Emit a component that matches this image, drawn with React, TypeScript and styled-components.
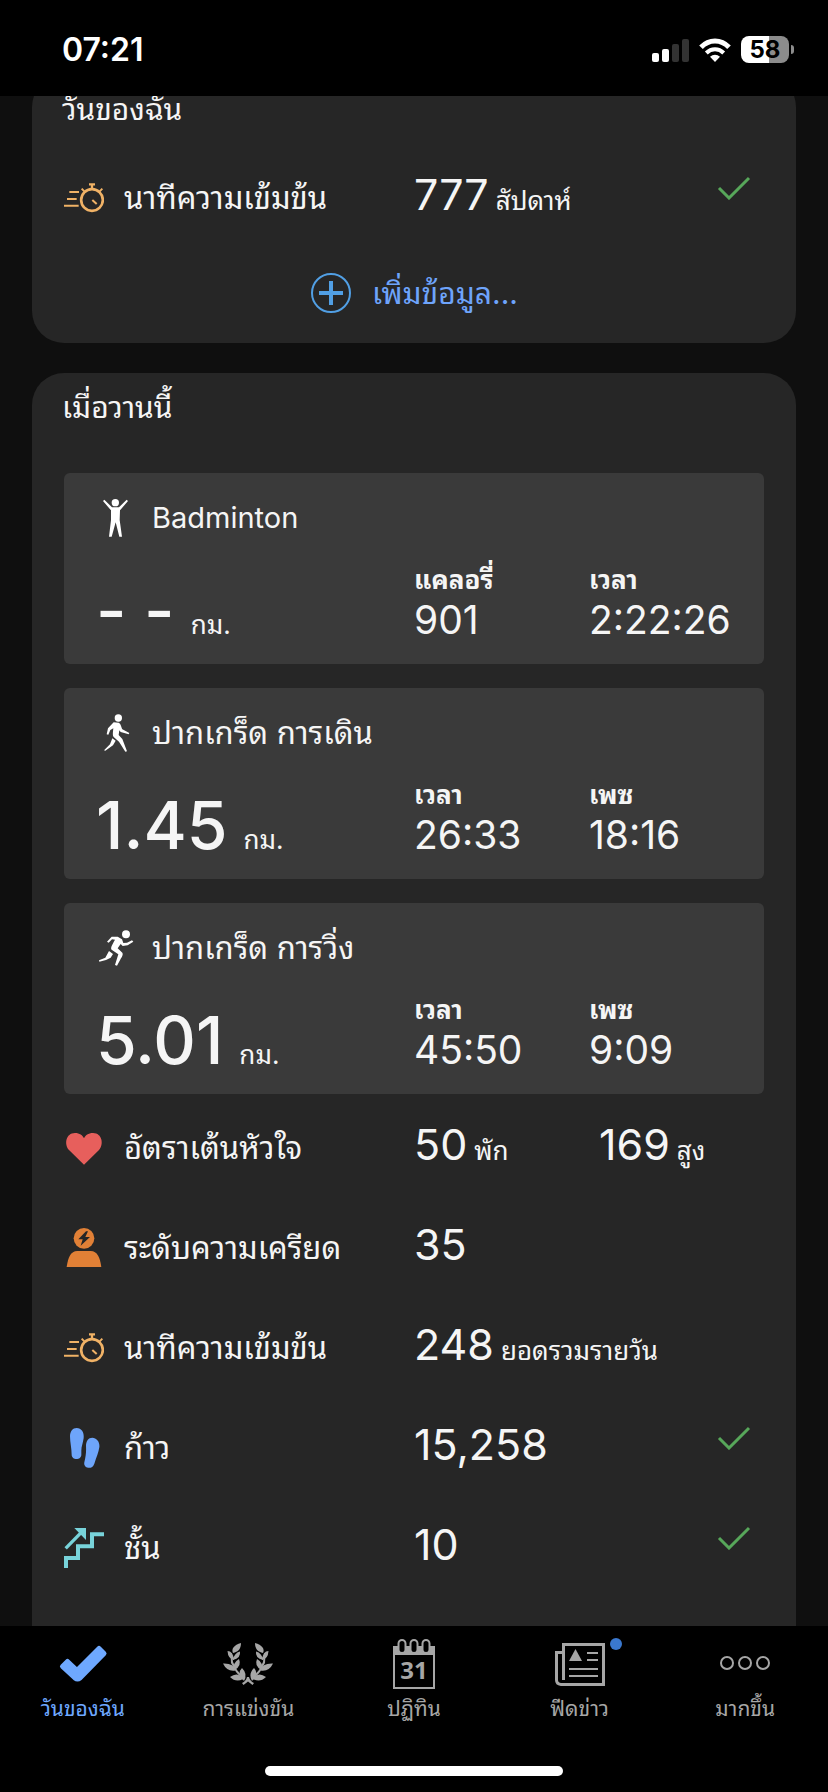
import React from "react";
import styled, { createGlobalStyle } from "styled-components";

const GlobalStyle = createGlobalStyle`
  * { box-sizing: border-box; }
  body {
    margin: 0;
    background: #0f0f0f;
    color: #f5f5f5;
    font-family: Inter, "Noto Sans Thai Looped", "Noto Looped Thai", Loma, Waree, Garuda, Umpush, "Noto Serif Thai", "Noto Sans Thai", sans-serif;
  }
  button { font: inherit; color: inherit; background: none; border: 0; padding: 0; cursor: pointer; }
  h2, h3, p, dl, dd, dt, ul { margin: 0; padding: 0; font-weight: 400; }
  svg { display: block; flex: none; }
`;

const Screen = styled.div`
  display: flex;
  flex-direction: column;
  height: 100vh;
  overflow: hidden;
`;

const StatusBar = styled.header`
  display: flex;
  align-items: center;
  justify-content: space-between;
  flex: none;
  height: 96px;
  padding: 3px 34px 0 62px;
  background: #000;
`;

const Clock = styled.time`
  font-size: 32px;
  line-height: 40px;
  font-weight: 600;
  color: #fff;
`;

const StatusIcons = styled.div`
  display: flex;
  align-items: center;
  gap: 10px;
`;

const Battery = styled.div`
  display: flex;
  align-items: center;
  gap: 2px;
`;

const BatteryBody = styled.div`
  width: 48px;
  border-radius: 8px;
  background: linear-gradient(to right, #fff 58%, #8c8c8c 58%);
  color: #000;
  font-size: 24px;
  line-height: 27px;
  font-weight: 700;
  text-align: center;
`;

const BatteryTip = styled.div`
  width: 3px;
  height: 9px;
  border-radius: 0 3px 3px 0;
  background: #8c8c8c;
`;

const Feed = styled.main`
  flex: 1;
  min-height: 0;
  overflow: hidden;
  padding: 0 32px;
`;

const Card = styled.section<{ $scrolled?: boolean }>`
  margin-top: ${(p) => (p.$scrolled ? "-21px" : "30px")};
  padding: 0 32px;
  border-radius: 32px;
  background: #262626;
`;

const CardTitle = styled.h2<{ $tall?: boolean }>`
  height: ${(p) => (p.$tall ? "100px" : "73px")};
  padding-top: 14px;
  margin-left: -2px;
  font-size: 30px;
  line-height: 40px;
`;

const AddButton = styled.button`
  display: flex;
  align-items: center;
  justify-content: center;
  gap: 20px;
  width: 100%;
  height: 95px;
  padding-bottom: 5px;
  color: #6ea4fb;
  font-size: 30px;
  line-height: 40px;
`;

const Activities = styled.div`
  display: grid;
  gap: 24px;
  margin-bottom: 4px;
`;

const Activity = styled.article`
  height: 191px;
  padding-top: 24px;
  border-radius: 6px;
  background: #3a3a3a;
`;

const ActivityHead = styled.header`
  display: flex;
  align-items: center;
  gap: 16px;
  padding-left: 32px;
  height: 42px;
`;

const ActivityName = styled.h3`
  font-size: 31px;
  line-height: 40px;

  &:lang(en) { font-size: 29px; }
`;

const ActivityStats = styled.div`
  display: grid;
  grid-template-columns: minmax(0, 2fr) minmax(0, 1fr) minmax(0, 1fr);
  align-items: last baseline;
  height: 111px;
`;

const Distance = styled.p`
  display: flex;
  align-items: baseline;
  gap: 16px;
  padding-left: 32px;
  font-size: 66px;
  line-height: 80px;
  font-weight: 500;
`;

const Unit = styled.span`
  font-size: 26px;
  line-height: 32px;
  font-weight: 400;
`;

const Stat = styled.dl`
  white-space: nowrap;
  dt { font-size: 26px; line-height: 32px; font-weight: 700; }
  dd { font-size: 39px; line-height: 48px; }
`;

const Metric = styled.div`
  display: grid;
  grid-template-columns: minmax(0, 2fr) minmax(0, 1fr) minmax(0, 1fr);
  align-items: center;
  height: 100px;
  padding-bottom: 1px;
`;

const MetricName = styled.div`
  display: flex;
  align-items: center;
  gap: 20px;
  font-size: 31px;
  line-height: 40px;
  white-space: nowrap;
`;

const MetricValue = styled.div<{ $second?: boolean }>`
  display: flex;
  align-items: baseline;
  gap: 7px;
  padding-left: ${(p) => (p.$second ? "10px" : "0")};
  padding-bottom: 8px;
  font-size: 43px;
  line-height: 52px;
  white-space: nowrap;
`;

const Goal = styled.div`
  display: flex;
  justify-content: flex-end;
  grid-column: 3;
  padding: 0 13px 20px 0;
`;

const TabBar = styled.nav`
  display: flex;
  flex: none;
  background: #000;
`;

const Tab = styled.button<{ $active?: boolean }>`
  display: flex;
  flex: 1;
  flex-direction: column;
  align-items: center;
  gap: 3px;
  padding-top: 10px;
  color: ${(p) => (p.$active ? "#6ea8ff" : "#a6a6a6")};
  font-size: 21px;
  line-height: 32px;
`;

const TabIcon = styled.span`
  position: relative;
`;

const Dot = styled.i`
  position: absolute;
  top: 2px;
  right: -16px;
  width: 12px;
  height: 12px;
  border-radius: 50%;
  background: #3a78cf;
`;

const HomeArea = styled.footer`
  display: flex;
  justify-content: center;
  flex: none;
  padding: 41px 0 16px;
  background: #000;
`;

const HomeIndicator = styled.div`
  width: 36%;
  height: 10px;
  border-radius: 5px;
  background: #fff;
`;

const Signal = () => (
  <svg width="37" height="24" viewBox="0 0 37 24" aria-hidden="true">
    <rect x="0" y="15" width="7" height="9" rx="2" fill="#fff" />
    <rect x="10" y="11" width="7" height="13" rx="2" fill="#fff" />
    <rect x="20" y="6" width="7" height="18" rx="2" fill="#333" />
    <rect x="30" y="1" width="7" height="23" rx="2" fill="#333" />
  </svg>
);

const Wifi = () => (
  <svg width="32" height="24" viewBox="0 0 32 24" fill="none" stroke="#fff" strokeWidth="5" aria-hidden="true">
    <path d="M2 9.200C10 .8 22 .8 30 9.200" />
    <path d="M7.300 15C12.300 10 19.700 10 24.700 15" strokeWidth="4" />
    <path d="M11 18.800C14 16 18 16 21 18.800L16 24Z" fill="#fff" stroke="none" />
  </svg>
);

const Stopwatch = () => (
  <svg width="40" height="40" viewBox="72 684 120 120" fill="none" stroke="#f0b266" aria-hidden="true">
    <circle cx="156" cy="750" r="32.500" strokeWidth="8" />
    <path d="M157 750l13 12" strokeWidth="6" />
    <path d="M147 703h18M156 703v15" strokeWidth="7" />
    <path d="M125 716l8 8M187 716l-8 8" strokeWidth="6" />
    <path d="M88 726h29M81 747h29M72 767h44" strokeWidth="6" />
  </svg>
);

const Heart = () => (
  <svg width="40" height="40" viewBox="72 84 120 120" fill="#e75f5c" aria-hidden="true">
    <path d="M132 194L87 150C72 134 77 99 105 99C119 99 128 106 132 115C136 106 145 99 159 99C187 99 192 134 177 150Z" />
  </svg>
);

const Stress = () => (
  <svg width="40" height="40" viewBox="72 384 120 120" fill="#e18036" aria-hidden="true">
    <circle cx="132" cy="415" r="31" />
    <path d="M80 501C84 473 92 453 112 453H152C172 453 180 473 184 501Z" />
    <path d="M138 394L115 418H128L122 437L150 411H136L144 394Z" fill="#262626" />
  </svg>
);

const Steps = () => (
  <svg width="40" height="40" viewBox="72 171 120 120" fill="#6ea5fa" aria-hidden="true">
    <path d="M110 171C124 171 133 184 131 201C129 217 124 226 124 239V251C124 268 95 268 95 251C95 232 90 214 90 196C90 181 98 171 110 171Z" />
    <path d="M157 200C170 200 180 213 178 229C176 245 169 258 163 278C158 297 129 293 133 274C137 257 139 246 138 225C138 210 145 200 157 200Z" />
  </svg>
);

const Floors = () => (
  <svg width="40" height="40" viewBox="72 471 120 120" fill="none" stroke="#78d3da" aria-hidden="true">
    <path d="M78 591V561H114V526H156V490H192" strokeWidth="12" />
    <path d="M77 532L124 484" strokeWidth="10" />
    <path d="M103 471H138V507Z" fill="#78d3da" stroke="none" />
  </svg>
);

const Calories = () => (
  <svg width="40" height="40" viewBox="0 0 40 40" fill="#6ea5fa" aria-hidden="true">
    <path d="M20 4C24 12 32 16 32 25A12 12 0 0 1 8 25C8 19 12 16 13 11C16 13 19 10 20 4Z" />
  </svg>
);

const ArmsUp = () => (
  <svg width="40" height="40" viewBox="198 114 120 120" fill="#fff" aria-hidden="true">
    <circle cx="256" cy="128" r="11" />
    <path d="M219 123L223 119L246 142H267L290 119L294 123L270 151L269 180L276 230H268L257 187L245 230H237L243 180V151Z" />
  </svg>
);

const Walker = () => (
  <svg width="40" height="40" viewBox="198 70 120 120" fill="#fff" aria-hidden="true">
    <circle cx="265" cy="85" r="11" />
    <path d="M251 98L266 99C272 101 274 112 277 119L298 130L296 134L272 127L268 122L266 136L277 148L291 185L286 186L267 156L251 142C247 138 249 126 250 116L241 121L235 135L230 134L234 116Z" />
    <path d="M247 146L257 153L249 167L226 183L222 182L240 164Z" />
  </svg>
);

const Runner = () => (
  <svg width="40" height="40" viewBox="198 712 120 120" fill="#fff" aria-hidden="true">
    <circle cx="288" cy="731" r="12" />
    <path d="M245 738H263L276 746L280 757L291 756L306 749L310 753L293 764L278 766L272 760L263 773L277 786C280 790 277 797 273 803L261 825L255 823L265 791L246 778C240 773 245 765 255 747L246 746L236 756L231 753Z" />
    <path d="M237 781L249 790L242 801L228 808L208 813L207 809L226 801Z" />
  </svg>
);

const Plus = () => (
  <svg width="42" height="42" viewBox="0 0 42 42" fill="none" stroke="#519fe4" aria-hidden="true">
    <circle cx="21" cy="21" r="19" strokeWidth="2" />
    <path d="M21 9V33M9 21H33" strokeWidth="4" />
  </svg>
);

const Check = () => (
  <svg width="34" height="24" viewBox="0 0 34 24" fill="none" stroke="#57a75a" strokeWidth="3" aria-hidden="true">
    <path d="M2 12L12 22L32 2" />
  </svg>
);

const DayIcon = () => (
  <svg width="52" height="54" viewBox="0 0 52 54" aria-hidden="true">
    <path
      d="M5.500 30.500L10.500 25.500L20 34.500L42 12.500L47 17.500L23 42Q20.500 44 18 42Z"
      fill="currentColor"
      stroke="currentColor"
      strokeWidth="5"
      strokeLinejoin="round"
    />
  </svg>
);

const Branch = () => (
  <g>
    <path d="M18 7C11 9 8 13 10 17C15 16 18 13 18 7Z" />
    <path d="M4.500 15Q10 15 11 24Q5 23 4.500 15ZM10 24Q11 17 17 15.500Q18 22 10 24Z" />
    <path d="M0 27.500Q11 27 12.500 34.500Q4 36 0 27.500ZM11.500 34Q9 27 16 23Q19 30 11.500 34Z" />
    <path d="M7 41Q15 35 20 43Q13 47 7 41ZM19.500 43Q14 37 19 32Q25 38 21 45Z" />
    <path d="M9 17L7.500 17.500L8 27L13 36L20 44L21 42L14 34L10 26Z" />
    <path d="M19 47Q23 45 24 41H25V45.500L20.500 49Z" />
  </g>
);

const WreathIcon = () => (
  <svg width="52" height="54" viewBox="-1 0 52 54" fill="currentColor" aria-hidden="true">
    <Branch />
    <g transform="matrix(-1 0 0 1 50 0)">
      <Branch />
    </g>
  </svg>
);

const CalendarIcon = () => (
  <svg width="52" height="54" viewBox="0 0 52 54" aria-hidden="true">
    <rect x="6" y="14" width="40" height="38" fill="none" stroke="currentColor" strokeWidth="2" />
    <rect x="5" y="10" width="42" height="9" fill="currentColor" />
    <g fill="#000" stroke="currentColor" strokeWidth="2">
      <rect x="10.500" y="4" width="7" height="13" rx="3.500" />
      <rect x="22.500" y="4" width="7" height="13" rx="3.500" />
      <rect x="34.500" y="4" width="7" height="13" rx="3.500" />
    </g>
    <text x="26" y="43" textAnchor="middle" fontFamily="Open Sans" fontSize="24" fontWeight="700" fill="currentColor">31</text>
  </svg>
);

const NewsIcon = () => (
  <svg width="52" height="54" viewBox="0 0 52 54" fill="none" stroke="currentColor" strokeWidth="3" aria-hidden="true">
    <path d="M9.500 44V8.500H49.500V48.500H7Q2.500 48 2.500 44V16.500H9" />
    <path d="M33 17H44M33 24H44M15 33H44M15 40H44" strokeWidth="2" />
    <path d="M15 25L21.500 13L28 25Z" fill="currentColor" stroke="none" />
  </svg>
);

const MoreIcon = () => (
  <svg width="52" height="54" viewBox="0 0 52 54" fill="none" stroke="currentColor" strokeWidth="2" aria-hidden="true">
    <circle cx="8" cy="27" r="6" />
    <circle cx="26" cy="27" r="6" />
    <circle cx="44" cy="27" r="6" />
  </svg>
);

type Reading = { value: string; unit?: string };

const activities = [
  { icon: <ArmsUp />, name: "Badminton", lang: "en", distance: "- -", stats: [["แคลอรี่", "901"], ["เวลา", "2:22:26"]] },
  { icon: <Walker />, name: "ปากเกร็ด การเดิน", lang: "th", distance: "1.45", stats: [["เวลา", "26:33"], ["เพซ", "18:16"]] },
  { icon: <Runner />, name: "ปากเกร็ด การวิ่ง", lang: "th", distance: "5.01", stats: [["เวลา", "45:50"], ["เพซ", "9:09"]] },
];

const metrics: { icon: React.ReactNode; name: string; readings: Reading[]; met?: boolean }[] = [
  { icon: <Heart />, name: "อัตราเต้นหัวใจ", readings: [{ value: "50", unit: "พัก" }, { value: "169", unit: "สูง" }] },
  { icon: <Stress />, name: "ระดับความเครียด", readings: [{ value: "35" }] },
  { icon: <Stopwatch />, name: "นาทีความเข้มข้น", readings: [{ value: "248", unit: "ยอดรวมรายวัน" }] },
  { icon: <Steps />, name: "ก้าว", readings: [{ value: "15,258" }], met: true },
  { icon: <Floors />, name: "ชั้น", readings: [{ value: "10" }], met: true },
  { icon: <Calories />, name: "แคลอรี่", readings: [] },
];

const tabs = [
  { icon: <DayIcon />, name: "วันของฉัน" },
  { icon: <WreathIcon />, name: "การแข่งขัน" },
  { icon: <CalendarIcon />, name: "ปฏิทิน" },
  { icon: <NewsIcon />, name: "ฟีดข่าว", unread: true },
  { icon: <MoreIcon />, name: "มากขึ้น" },
];

function MetricRow({ icon, name, readings, met }: (typeof metrics)[number]) {
  return (
    <Metric>
      <MetricName>{icon}{name}</MetricName>
      {readings.map((r, i) => (
        <MetricValue key={r.value} $second={i > 0}>
          {r.value}
          {r.unit && <Unit>{r.unit}</Unit>}
        </MetricValue>
      ))}
      {met && <Goal><Check /></Goal>}
    </Metric>
  );
}

export default function App() {
  return (
    <Screen lang="th">
      <GlobalStyle />
      <StatusBar>
        <Clock>07:21</Clock>
        <StatusIcons>
          <Signal />
          <Wifi />
          <Battery>
            <BatteryBody>58</BatteryBody>
            <BatteryTip />
          </Battery>
        </StatusIcons>
      </StatusBar>
      <Feed>
        <Card $scrolled>
          <CardTitle>วันของฉัน</CardTitle>
          <MetricRow icon={<Stopwatch />} name="นาทีความเข้มข้น" readings={[{ value: "777", unit: "สัปดาห์" }]} met />
          <AddButton type="button"><Plus />เพิ่มข้อมูล...</AddButton>
        </Card>
        <Card>
          <CardTitle $tall>เมื่อวานนี้</CardTitle>
          <Activities>
            {activities.map((a) => (
              <Activity key={a.name}>
                <ActivityHead>
                  {a.icon}
                  <ActivityName lang={a.lang}>{a.name}</ActivityName>
                </ActivityHead>
                <ActivityStats>
                  <Distance>{a.distance}<Unit>กม.</Unit></Distance>
                  {a.stats.map(([label, value]) => (
                    <Stat key={label}>
                      <dt>{label}</dt>
                      <dd>{value}</dd>
                    </Stat>
                  ))}
                </ActivityStats>
              </Activity>
            ))}
          </Activities>
          {metrics.map((m) => <MetricRow key={m.name} {...m} />)}
        </Card>
      </Feed>
      <TabBar>
        {tabs.map((t, i) => (
          <Tab key={t.name} type="button" $active={i === 0}>
            <TabIcon>{t.icon}{t.unread && <Dot />}</TabIcon>
            {t.name}
          </Tab>
        ))}
      </TabBar>
      <HomeArea><HomeIndicator /></HomeArea>
    </Screen>
  );
}
